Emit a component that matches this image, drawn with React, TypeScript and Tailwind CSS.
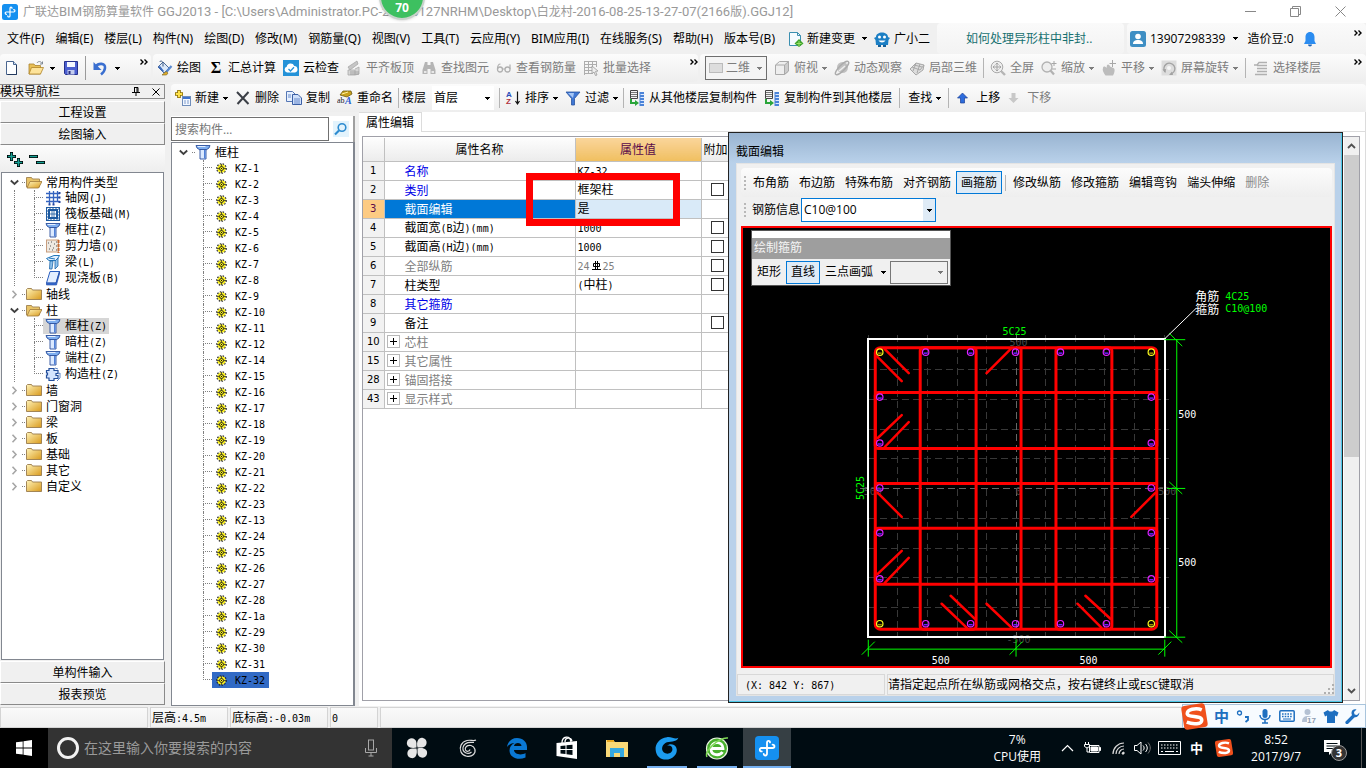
import type { ReactNode } from "react";

/* ---------- text helpers ---------- */

// Latin runs are set at half the width of a CJK glyph, like a bitmap Song face.
function Song({ children }: { children: string }) {
  return (
    <span className="font-['Noto_Sans_CJK_SC',sans-serif] text-[12px] whitespace-pre">
      {children.split(/([\x20-\x7e]+)/).map((part, i) =>
        i % 2 ? (
          <span key={i} className="font-['DejaVu_Sans_Mono',monospace] text-[10px]">
            {part}
          </span>
        ) : (
          part
        ),
      )}
    </span>
  );
}

function Caret({ className = "" }: { className?: string }) {
  return (
    <svg width="5" height="3" viewBox="0 0 5 3" className={`shrink-0 ${className}`} fill="currentColor" shapeRendering="crispEdges">
      <path d="M0 0h5v1H4v1H3v1H2V2H1V1H0z" />
    </svg>
  );
}

function More() {
  return (
    <svg width="8" height="6" viewBox="0 0 8 6" fill="none" stroke="#000" strokeWidth="1.4" className="shrink-0">
      <path d="M.5.5 3 3 .5 5.5M4.5.5 7 3 4.5 5.5" />
    </svg>
  );
}

function Sep({ className = "" }: { className?: string }) {
  return <span className={`h-5 w-px shrink-0 bg-[#b4b4b4] ${className}`} />;
}

/* ---------- icons ---------- */

function Icon({ children, size = 16, box = 16 }: { children: ReactNode; size?: number; box?: number }) {
  return (
    <svg width={size} height={size} viewBox={`0 0 ${box} ${box}`} fill="none" className="shrink-0">
      {children}
    </svg>
  );
}

const AppLogo = ({ size }: { size: number }) => (
  <Icon size={size}>
    <rect width="16" height="16" rx="2.5" fill="#1590f0" />
    <path
      d="M10 4.300C10 2.800 8 2.800 8 4.500V8H4.300C2.800 8 2.800 10.300 4.500 10.300M8 8h3.700c1.700 0 1.700-2.300 0-2.300M8 8v3.700c0 1.700-2.200 1.700-2.200.2"
      stroke="#fff"
      strokeWidth="1.200"
      strokeLinecap="round"
    />
  </Icon>
);

const NewFile = () => (
  <Icon>
    <path d="M2.500 1.500h7l3 3v10h-10z" fill="#fdfeff" stroke="#4a6690" />
    <path d="M9.500 1.500v3h3" fill="#c9dcf2" stroke="#4a6690" />
    <path d="M12.500 5v9.500h-9" stroke="#23395d" />
  </Icon>
);

const OpenFolder = () => (
  <Icon>
    <path d="M1 4h5l1 1.500h5.500V14H1z" fill="#e8bf55" stroke="#a98330" strokeWidth=".8" />
    <path d="M3.500 7.500H15.500L12.500 14H1z" fill="#fde39a" stroke="#b0852a" strokeWidth=".8" />
    <path d="M9 3c1-2 4-2 5 .5M14.500 1.500v2.500h-2.500" stroke="#7d8792" />
  </Icon>
);

const Save = () => (
  <Icon>
    <path d="M1.500 1.500h13v13h-12l-1-1z" fill="#4b5fd0" stroke="#26308c" />
    <path d="M4 2h8v5H4z" fill="#f5f8ff" />
    <path d="M4.500 10h7v4.500h-7z" fill="#c4cdee" />
    <path d="M5.500 11h2v3h-2z" fill="#2a2f80" />
  </Icon>
);

const Undo = () => (
  <Icon>
    <path d="M4 6.500C6 3 13.500 2.500 13 8c-.3 3-2 5-4 6.500" stroke="#3a6fd0" strokeWidth="2.600" />
    <path d="M1.500 2v8h8z" fill="#3a6fd0" />
  </Icon>
);

const Paint = () => (
  <Icon>
    <path d="M6 2l6 6-5 5-6-6z" fill="#dbe8f8" stroke="#4c6a99" />
    <path d="M2.500 2c1.500-2 3.500-.5 3.500 1.500v3" stroke="#38557f" />
    <path d="M1 7l5 5 1-1-4-5z" fill="#3c6cc0" />
    <path d="M14.500 6 8 13.500" stroke="#5a8ad0" strokeWidth="2.200" />
    <path d="M9 11.500l-4 3.500h4.500l1.500-2z" fill="#e0ad2c" stroke="#76611d" strokeWidth=".6" />
  </Icon>
);

const CloudCheck = () => (
  <Icon>
    <rect width="16" height="16" fill="#2492d8" />
    <path d="M4 12.500a3 3 0 0 1-.3-5.800A4 4 0 0 1 11.300 6a3.300 3.300 0 0 1 .7 6.500z" fill="#fff" />
    <path d="M5.500 9l2 2 3.500-3.800" stroke="#2492d8" strokeWidth="1.300" />
  </Icon>
);

const AlignSlab = () => (
  <Icon>
    <path d="M2 7l9-6 1 3-8 6z" fill="#c6c6c6" stroke="#a2a2a2" strokeWidth=".7" />
    <path d="M2 10h7v5H2zM9 9l4-2v7l-4 1" fill="#d6d6d6" stroke="#a8a8a8" strokeWidth=".8" />
    <path d="M4 12h9M4 14h9" stroke="#999" strokeWidth=".8" />
  </Icon>
);

const Binocular = () => (
  <Icon>
    <path d="M4 2h2.500v3h3V2H12l2.500 8v4h-5v-5h-3v5h-5v-4z" fill="#b5b5b5" />
    <path d="M3 11h2.500v2H3zM10.500 11H13v2h-2.500z" fill="#e8e8e8" />
  </Icon>
);

const Glasses = () => (
  <Icon>
    <circle cx="4" cy="9.500" r="2.500" stroke="#b0b0b0" strokeWidth="1.300" />
    <circle cx="11.500" cy="9.500" r="2.500" stroke="#b0b0b0" strokeWidth="1.300" />
    <path d="M6.500 9h2.500M1.500 9c0-3 1-5 3-5M14 9V4.500" stroke="#b0b0b0" strokeWidth="1.200" />
  </Icon>
);

const BatchSelect = () => (
  <Icon>
    <path d="M1.500 1.500h12M1.500 4.500h12M1.500 7.500h8M1.500 10.500h8M1.500 13.500h8M1.500 1v14M5.500 1v13M9.500 1v6M13.500 1v6" stroke="#adadad" />
    <path d="M9 6l6 5-2.500.4L14 15l-1.500.6L11 12l-2 1.700z" fill="#eee" stroke="#999" strokeWidth=".8" />
  </Icon>
);

const Cube = () => (
  <Icon>
    <path d="M1.500 5l4-3.500h9V11l-4 3.500h-9z" fill="#eee" stroke="#aaa" />
    <path d="M10.500 5l4-3.500V11l-4 3.500z" fill="#ccc" stroke="#aaa" />
    <path d="M1.500 5h9" stroke="#aaa" />
  </Icon>
);

const Orbit = () => (
  <Icon>
    <circle cx="8.500" cy="7.500" r="5.500" fill="#c0c0c0" />
    <ellipse cx="8" cy="8" rx="9" ry="2.800" transform="rotate(-45 8 8)" stroke="#ababab" strokeWidth="1.400" />
    <path d="M5 11l6-5" stroke="#eee" strokeWidth="1.500" />
  </Icon>
);

const Local3d = () => (
  <Icon>
    <path d="M1 9l6-6 8 2-1 5-7 5z" fill="#ddd" stroke="#a8a8a8" />
    <path d="M3 7l8 3 4-5M5 5l8 2M4 11l3-8M8 13l3-9" stroke="#a8a8a8" />
  </Icon>
);

const FullScreen = () => (
  <Icon>
    <circle cx="7" cy="7" r="5.800" fill="#eee" stroke="#aaa" />
    <path d="M7 3v8M3 7h8M5.500 4.500 7 3l1.500 1.500M5.500 9.500 7 11l1.500-1.500M4.500 5.500 3 7l1.500 1.500M9.500 5.500 11 7 9.500 8.500" stroke="#a4a4a4" />
    <path d="M11 11l4 4" stroke="#b5b5b5" strokeWidth="2.400" />
  </Icon>
);

const Zoom = () => (
  <Icon>
    <circle cx="6" cy="7" r="5" fill="#eee" stroke="#b2b2b2" strokeWidth="1.300" />
    <path d="M9.500 10.500 13 14.500" stroke="#b2b2b2" strokeWidth="2.200" />
    <path d="M13 1v5M10.500 3.500h5M11 9h4" stroke="#a6a6a6" />
  </Icon>
);

const Pan = () => (
  <Icon>
    <path d="M2 8c0-2 2.500-2 3.500 0L6 5c1-1.500 3 0 3 1.500L12.500 8c2 1 1 5-.5 7.500H4.500C2.500 13 1 10 2 8z" fill="#bcbcbc" />
    <path d="M11.500 0v7M8.500 3.500h6.500" stroke="#a8a8a8" />
  </Icon>
);

const Rotate = () => (
  <Icon>
    <rect x=".5" y=".5" width="15" height="15" fill="#ddd" />
    <path d="M4 12a5.500 5.500 0 1 1 7 1.500" stroke="#a2a2a2" strokeWidth="1.300" />
    <path d="M8 15l3-3.500 1 3.500zM1.500 9.500 5 9l-.5 4z" fill="#a2a2a2" />
    <circle cx="8" cy="8" r="2" fill="#f6f6f6" />
  </Icon>
);

const Floors = () => (
  <Icon>
    <path d="M1 5h3l2-2.500h8M4 5.500h10M4 8.500h10M4 11.500h10M2 14.500h12" stroke="#b0b0b0" strokeWidth="1.300" />
  </Icon>
);

const NewItem = () => (
  <Icon>
    <path d="M4 0v8M0 4h8" stroke="#8a6d00" strokeWidth="3.600" />
    <path d="M4 .8v6.400M.8 4h6.400" stroke="#ffe24a" strokeWidth="2" />
    <rect x="7.500" y="6.500" width="8" height="9" fill="#f2f7ff" stroke="#6f8dba" />
    <path d="M8 7h7v2H8z" fill="#3d72d0" />
    <path d="M9 11h2M12 11h2M9 13h2M12 13h2" stroke="#7f9ccc" />
  </Icon>
);

const Cross = () => (
  <Icon>
    <path d="M2 2l11.500 12M13.500 2 2.500 14" stroke="#3b3f46" strokeWidth="2" />
  </Icon>
);

const Copy = () => (
  <Icon>
    <path d="M.5 1.500h6l3 3v7h-9z" fill="#e6f0ff" stroke="#5577b5" />
    <path d="M6.500 4.500h5.500l3.500 3.500v6.500h-9z" fill="#cfe0fb" stroke="#3b5fa5" />
    <path d="M8 9h6M8 11h6M8 13h6M2 5h3M2 7h3" stroke="#5b80c4" strokeWidth=".9" />
  </Icon>
);

const Rename = () => (
  <Icon>
    <path d="M3 5l3-4h8l1 3-5 3z" fill="#c9a21c" stroke="#6c5a14" strokeWidth=".8" />
    <path d="M5 4l6-2" stroke="#fff1a0" />
    <text x="0" y="13" fontSize="8" fontFamily="Liberation Serif" fill="#222">ab</text>
    <text x="8" y="14" fontSize="10" fontWeight="bold" fontStyle="italic" fontFamily="Liberation Serif" fill="#2d5fd0">A</text>
  </Icon>
);

const SortAz = () => (
  <Icon>
    <text x="1" y="7" fontSize="8" fontWeight="bold" fontFamily="Liberation Sans" fill="#2a4db8">A</text>
    <text x="1" y="14" fontSize="8" fontWeight="bold" fontFamily="Liberation Sans" fill="#b03040">Z</text>
    <path d="M12.500 1.500v12M10.500 11l2 3 2-3" stroke="#111" strokeWidth="1.200" />
  </Icon>
);

const Funnel = () => (
  <Icon>
    <path d="M1 2h14L9.500 8.500V15h-3V8.500z" fill="#3f77d4" stroke="#2a549f" strokeWidth=".8" />
    <path d="M3 3h6L8 8z" fill="#a5c6f6" />
  </Icon>
);

const FloorCopy = () => (
  <Icon>
    <path d="M1.500.5h7v8h-7z" fill="#f4f4f4" stroke="#444" />
    <path d="M2 2.500h6M2 4.500h6M2 6.500h6" stroke="#777" />
    <path d="M3 9v3h3v-2l4 3-4 3v-2H1V9z" fill="#2aa53a" />
    <path d="M10.500 2h4.500v14h-4.500z" fill="#4a83d8" />
    <path d="M11.500 4.500h4M11.500 7.500h4M11.500 10.500h4M11.500 13.500h4" stroke="#dce9ff" />
  </Icon>
);

const ArrowBlock = ({ down = false }: { down?: boolean }) => (
  <Icon>
    {down ? (
      <path d="M4.500 3h4v5h3l-5 5-5-5h3z" fill="#c8c8c8" />
    ) : (
      <path d="M4.500 13h4V8h3l-5-5-5 5h3z" fill="#2d6cdc" stroke="#1b3f95" strokeWidth=".7" />
    )}
  </Icon>
);

const Folder = ({ open }: { open?: boolean }) => (
  <Icon>
    <defs>
      <linearGradient id="folder" x1="0" y1="0" x2="1" y2="1">
        <stop offset="0" stopColor="#fff3b8" />
        <stop offset="1" stopColor="#d99a1c" />
      </linearGradient>
    </defs>
    {open ? (
      <>
        <path d="M.5 3.500h5l1 1.500h7V13H.5z" fill="#e9c468" stroke="#a88b58" />
        <path d="M4 7.500H16L12.500 14H1z" fill="url(#folder)" stroke="#a0783a" strokeWidth=".8" />
      </>
    ) : (
      <path d="M.5 3.500l1-1h4l1 1.500h9v9.500H.5z" fill="url(#folder)" stroke="#9a7c4c" strokeWidth=".9" />
    )}
  </Icon>
);

const Pillar = () => (
  <Icon>
    <path d="M1 1.500h14l-1 2.500-3 2H5L2 4z" fill="#7eaef0" stroke="#2a4f9c" strokeWidth=".9" />
    <path d="M2.500 2.500h8" stroke="#e3efff" />
    <path d="M5 5.500h6V15H5z" fill="#dceaff" stroke="#2a4f9c" strokeWidth=".9" />
    <path d="M9 6h1.500v8.500H9z" fill="#4f80d8" />
  </Icon>
);

const Axis = () => (
  <Icon>
    <path d="M4.500 1v13M8.500 1v13M12.500 1v11M1 3.500h14M1 7.500h14M1 11.500h14" stroke="#3565c0" strokeWidth="1.300" />
    <path d="M13.500 2h2v2h-2zM13.500 6.500h2v2h-2zM13.500 11h2v2h-2zM3.500 13.500h2v2h-2zM7.500 13.500h2v2h-2z" fill="#2447a0" />
  </Icon>
);

const Raft = () => (
  <Icon>
    <rect x="1" y="1" width="14" height="14" fill="#1d5aa0" />
    <rect x="2.500" y="2.500" width="11" height="11" stroke="#fff" strokeDasharray="2 1" />
    <rect x="5" y="5" width="6" height="6" fill="#fff" />
    <path d="M7 5v6M9 5v6M5 8h6" stroke="#1d5aa0" strokeWidth=".8" />
  </Icon>
);

const ShearWall = () => (
  <Icon>
    <rect x="1.500" y="2" width="12" height="12" fill="#eee9e2" stroke="#c89d7d" />
    <path d="M3 5h1M6 4h1M9 6h1M5 8h1M8 10h1M4 11h1M11 8h1M11 12h1M7 12h1M11 4h1" stroke="#555" />
    <path d="M13.500 2v13" stroke="#c66a33" strokeWidth="2" strokeDasharray="3 1" />
  </Icon>
);

const Beam = () => (
  <Icon>
    <path d="M1.500 4.500 9 1.500h5.500l-3 5H4z" fill="#e2f0ff" stroke="#2277bb" />
    <path d="M5 7h3l-1 8H4.500zM10 7l3-3v8l-3 3z" fill="#8ec3ee" stroke="#1e66a8" strokeWidth=".8" />
    <path d="M4 4l6 1" stroke="#2277bb" />
  </Icon>
);

const Slab = () => (
  <Icon>
    <path d="M5 1.500h9.500L11 13H1.500z" fill="#e4efff" stroke="#2b5fc0" />
    <path d="M1.500 13H11l3.500-11.500V4L11.500 15H1.500z" fill="#3a6fd6" stroke="#2048a0" strokeWidth=".6" />
  </Icon>
);

const Tie = () => (
  <Icon>
    <path d="M4 2.500h5v2h4v3h-2v2h2v3H9v2H4v-2.500H1.500V9h1V7h-1V4.500H4z" fill="#d4e5ff" stroke="#234f9c" strokeWidth="1.200" />
    <path d="M10 2l3 1M13 8l2-1v5l-3 3" stroke="#5f86c9" />
  </Icon>
);

const Gear = () => (
  <svg width="11" height="11" viewBox="0 0 11 11" fill="none" className="shrink-0">
    <circle cx="5.500" cy="5.500" r="4.300" fill="#f4ea1c" />
    <circle cx="5.500" cy="5.500" r="4.800" stroke="#222" strokeWidth="1.100" strokeDasharray="1.500 1.400" />
    <path d="M5.500 1v9M1 5.500h9" stroke="#333" strokeWidth=".8" />
    <circle cx="5.500" cy="5.500" r="2" stroke="#222" fill="#f4ea1c" strokeWidth=".9" />
    <path d="M5 5h1v1H5z" fill="#111" />
  </svg>
);

const Chevron = ({ open }: { open?: boolean }) => (
  <svg width="9" height="9" viewBox="0 0 9 9" fill="none" className="shrink-0">
    {open ? (
      <path d="M.8 2.500 4.500 6l3.700-3.500" stroke="#404040" strokeWidth="1.800" />
    ) : (
      <path d="M2.500.8 6 4.500 2.500 8.200" stroke="#a6a6a6" strokeWidth="1.600" />
    )}
  </svg>
);

/* ---------- top bars ---------- */

function TitleBar() {
  return (
    <header className="relative flex h-[23px] shrink-0 items-center bg-white pl-[2px] text-[12px] text-[#999]">
      <AppLogo size={16} />
      <h1 className="ml-[5px] flex-1 font-['Roboto','Noto_Sans_CJK_SC',sans-serif] text-[13px] whitespace-nowrap">
        <span className="text-[12px]">广联达</span>BIM<span className="text-[12px]">钢筋算量软件</span> GGJ2013 -
        [C:\Users\Administrator.PC-20160127NRHM\Desktop\<span className="text-[12px]">白龙村</span>
        -2016-08-25-13-27-07(2166<span className="text-[12px]">版</span>).GGJ12]
      </h1>
      <div className="absolute -top-[26px] left-[379px] flex size-[46px] items-end justify-center rounded-full border-2 border-[#c8d2cb] bg-[#3dc060] pb-[2px] text-[12px] leading-4 font-bold text-white shadow">
        70
      </div>
      <div className="flex gap-[34px] pr-5">
        <button aria-label="最小化">
          <svg width="11" height="11" viewBox="0 0 11 11" stroke="#888"><path d="M0 5.500h11" /></svg>
        </button>
        <button aria-label="还原">
          <svg width="11" height="11" viewBox="0 0 11 11" fill="none" stroke="#888">
            <path d="M.5 2.500h8v8h-8zM2.500 2V.5h8v8H9" />
          </svg>
        </button>
        <button aria-label="关闭">
          <svg width="11" height="11" viewBox="0 0 11 11" stroke="#888"><path d="M.5.5l10 10M10.500.5l-10 10" /></svg>
        </button>
      </div>
    </header>
  );
}

const menus = [
  "文件(F)", "编辑(E)", "楼层(L)", "构件(N)", "绘图(D)", "修改(M)", "钢筋量(Q)", "视图(V)",
  "工具(T)", "云应用(Y)", "BIM应用(I)", "在线服务(S)", "帮助(H)", "版本号(B)",
];

function MenuBar() {
  return (
    <nav className="flex h-[31px] shrink-0 items-stretch bg-[#f0f0f0]">
      <div className="flex w-[937px] shrink-0 items-center pr-[7px] pl-[7px]">
        <div className="flex gap-[11px] font-['Noto_Sans','Noto_Sans_CJK_SC',sans-serif]">
          {menus.map((m) => (
            <button key={m} className="whitespace-nowrap">{m}</button>
          ))}
        </div>
        <button className="ml-auto flex items-center gap-[3px] whitespace-nowrap">
          <Icon>
            <path d="M1.500 1.500h8l3 3v10h-11z" fill="#f5fbff" stroke="#3b8fb0" />
            <path d="M9.500 1.500v3h3" stroke="#3b8fb0" />
            <path d="M11 8l4.500 4.500L11 16l-4.500-3.500z" fill="#3fa32b" />
            <path d="M11 10v5M8.500 12.500h5" stroke="#9be36b" />
          </Icon>
          新建变更
          <Caret className="ml-1" />
        </button>
        <button className="ml-[7px] flex items-center gap-1 whitespace-nowrap">
          <Icon>
            <path d="M2 6c0-6 12-6 12 0l2 1-1.500 2-.5 5H2L1.500 9 0 7z" fill="#1c7fc4" />
            <circle cx="5.500" cy="6" r="1.500" fill="#fff" />
            <circle cx="10.500" cy="6" r="1.500" fill="#fff" />
            <path d="M4.500 9.500c1.500 2.500 5.500 2.500 7 0z" fill="#fff" />
            <path d="M4 14v2h3v-2M9 14v2h3v-2" fill="#14609a" />
          </Icon>
          广小二
        </button>
      </div>
      <a href="#tip" className="flex w-[187px] shrink-0 items-center rounded bg-gradient-to-b from-[#fafafa] to-[#f3f3f3] pl-[29px] text-[#167070]">
        如何处理异形柱中非封..
      </a>
      <div className="ml-[3px] flex flex-1 items-center rounded bg-gradient-to-b from-[#fafafa] to-[#f3f3f3] pl-[3px] whitespace-nowrap">
        <Icon>
          <rect width="16" height="16" rx="2.500" fill="#3f8fc4" />
          <circle cx="8" cy="5.500" r="2.800" fill="#fff" />
          <path d="M3 13c0-3 2-4 5-4s5 1 5 4z" fill="#fff" />
        </Icon>
        <span className="ml-1">13907298339</span>
        <Caret className="ml-2" />
        <span className="ml-[9px]">造价豆:0</span>
        <span className="ml-2">
          <Icon>
            <path d="M8 1c3 0 4.500 2.500 4.500 5v4l1.500 3H2l1.500-3V6C3.500 3.500 5 1 8 1z" fill="#2b8cf0" />
            <path d="M6 13.500c0 2.500 4 2.500 4 0z" fill="#1c62b5" />
          </Icon>
        </span>
        <span className="mr-1 mb-3 ml-auto"><More /></span>
      </div>
    </nav>
  );
}

function Tool({ icon, label, caret, dim }: { icon?: ReactNode; label?: string; caret?: boolean; dim?: boolean }) {
  return (
    <button className={`flex shrink-0 items-center gap-1 whitespace-nowrap ${dim ? "text-[#7d7d7d]" : "text-black"}`} disabled={dim}>
      {icon}
      {label}
      {caret && <Caret />}
    </button>
  );
}

const strip = "flex items-center rounded bg-gradient-to-b from-[#fcfcfc] to-[#eee]";

function MainTools() {
  return (
    <div className="flex h-[30px] shrink-0 items-stretch gap-[2px] bg-[#f0f0f0] pb-[2px]">
      <div className={`${strip} w-[151px] shrink-0 pl-1`}>
        <NewFile />
        <span className="ml-2"><OpenFolder /></span>
        <Caret className="ml-[6px]" />
        <span className="ml-2"><Save /></span>
        <span className="mx-[6px] h-6 w-px bg-[#9a9a9a]" />
        <Undo />
        <Caret className="ml-[7px]" />
        <span className="mb-3 ml-auto pr-[3px]"><More /></span>
      </div>
      <div className={`${strip} w-[545px] shrink-0 gap-[7px] pl-1`}>
        <Tool icon={<Paint />} label="绘图" />
        <Tool icon={<span className="w-4 text-center font-['Liberation_Serif',serif] text-[16px] leading-4 font-bold">Σ</span>} label="汇总计算" />
        <Tool icon={<CloudCheck />} label="云检查" />
        <Tool icon={<AlignSlab />} label="平齐板顶" dim />
        <Tool icon={<Binocular />} label="查找图元" dim />
        <Tool icon={<Glasses />} label="查看钢筋量" dim />
        <Tool icon={<BatchSelect />} label="批量选择" dim />
        <span className="mb-3 ml-auto"><More /></span>
      </div>
      <div className={`${strip} min-w-0 flex-1 gap-[7px] pl-[5px]`}>
        <label className="relative flex h-6 w-[62px] shrink-0 items-center border border-[#6e6e6e] bg-[#f4f4f4] pl-[3px] text-[#7d7d7d]">
          <span className="h-[10px] w-[14px] border border-[#bbb] bg-[#ddd]" />
          <select aria-label="视图模式" className="absolute inset-0 appearance-none pl-[20px] leading-4">
            <option>二维</option>
          </select>
          <Caret className="pointer-events-none absolute right-1" />
        </label>
        <Tool icon={<Cube />} label="俯视" caret dim />
        <Tool icon={<Orbit />} label="动态观察" dim />
        <Tool icon={<Local3d />} label="局部三维" dim />
        <Sep className="-mx-px" />
        <Tool icon={<FullScreen />} label="全屏" dim />
        <Tool icon={<Zoom />} label="缩放" caret dim />
        <Tool icon={<Pan />} label="平移" caret dim />
        <Tool icon={<Rotate />} label="屏幕旋转" caret dim />
        <Sep />
        <Tool icon={<Floors />} label="选择楼层" dim />
        <span className="mb-3 ml-auto pr-1"><More /></span>
      </div>
    </div>
  );
}

function ComponentTools() {
  return (
    <div className={`${strip} h-7 shrink-0 gap-[7px] pl-1`}>
      <Tool icon={<NewItem />} label="新建" caret />
      <Tool icon={<Cross />} label="删除" />
      <Tool icon={<Copy />} label="复制" />
      <Tool icon={<Rename />} label="重命名" />
      <Sep className="-mx-[2px]" />
      <label className="-ml-[2px] flex shrink-0 items-center gap-[6px]">
        楼层
        <span className="relative flex h-6 w-[62px] items-center bg-white">
          <select aria-label="楼层" className="absolute inset-0 appearance-none pl-[2px] leading-4">
            <option>首层</option>
          </select>
          <Caret className="pointer-events-none absolute right-1" />
        </span>
      </label>
      <Sep className="-mx-[2px]" />
      <Tool icon={<SortAz />} label="排序" caret />
      <Tool icon={<Funnel />} label="过滤" caret />
      <Sep className="-mx-[2px]" />
      <Tool icon={<FloorCopy />} label="从其他楼层复制构件" />
      <Tool icon={<FloorCopy />} label="复制构件到其他楼层" />
      <Sep className="mr-px" />
      <Tool label="查找" caret />
      <Sep />
      <Tool icon={<ArrowBlock />} label="上移" />
      <Tool icon={<ArrowBlock down />} label="下移" dim />
    </div>
  );
}

/* ---------- module navigation ---------- */

type Leaf = { label: string; icon: ReactNode; active?: boolean };
type Branch = { label: string; items?: Leaf[] };

const modules: Branch[] = [
  {
    label: "常用构件类型",
    items: [
      { label: "轴网(J)", icon: <Axis /> },
      { label: "筏板基础(M)", icon: <Raft /> },
      { label: "框柱(Z)", icon: <Pillar /> },
      { label: "剪力墙(Q)", icon: <ShearWall /> },
      { label: "梁(L)", icon: <Beam /> },
      { label: "现浇板(B)", icon: <Slab /> },
    ],
  },
  { label: "轴线" },
  {
    label: "柱",
    items: [
      { label: "框柱(Z)", icon: <Pillar />, active: true },
      { label: "暗柱(Z)", icon: <Pillar /> },
      { label: "端柱(Z)", icon: <Pillar /> },
      { label: "构造柱(Z)", icon: <Tie /> },
    ],
  },
  { label: "墙" },
  { label: "门窗洞" },
  { label: "梁" },
  { label: "板" },
  { label: "基础" },
  { label: "其它" },
  { label: "自定义" },
];

function Elbow({ last, className }: { last: boolean; className: string }) {
  return (
    <span className={`flex h-4 shrink-0 flex-col ${className}`}>
      <span className="h-2 border-b border-l border-dotted border-[#808080]" />
      {!last && <span className="h-2 border-l border-dotted border-[#808080]" />}
    </span>
  );
}

function NavButton({ children }: { children: string }) {
  return (
    <button className="flex h-[22px] w-full shrink-0 items-center justify-center border border-[#fff] border-r-[#8a8a8a] border-b-[#8a8a8a] bg-[#f0f0f0]">
      <Song>{children}</Song>
    </button>
  );
}

function ModuleNav() {
  return (
    <aside className="flex w-[165px] shrink-0 flex-col pb-[1px]">
      <div className="flex h-[15px] shrink-0 items-center border border-l-0 border-[#8a8a8a] bg-[#f0f0f0] pr-1 leading-3">
        <h2 className="flex-1"><Song>模块导航栏</Song></h2>
        <button aria-label="固定" className="mr-3">
          <svg width="8" height="9" viewBox="0 0 8 9" fill="none" stroke="#000"><path d="M2 .5h4v5M2.500.5v5M5 .5v5M0 5.500h8M4 6v3" /></svg>
        </button>
        <button aria-label="关闭导航">
          <svg width="8" height="8" viewBox="0 0 8 8" stroke="#000"><path d="M.5.5l7 7M7.500.5l-7 7" /></svg>
        </button>
      </div>
      <div className="flex flex-col pt-[2px]">
        <NavButton>工程设置</NavButton>
        <NavButton>绘图输入</NavButton>
      </div>
      <div className="flex h-[27px] shrink-0 items-center gap-[6px] bg-gradient-to-b from-[#fcfcfc] to-[#eee] pt-[2px] pl-[7px]">
        <button aria-label="全部展开">
          <svg width="16" height="15" viewBox="0 0 16 15" fill="none">
            <path d="M4.500 0v9M0 4.500h9M11.500 6v9M7 10.500h9" stroke="#000" strokeWidth="3" />
            <path d="M4.500.8v7.400M.8 4.500h7.400M11.500 6.800v7.400M7.800 10.500h7.400" stroke="#16a094" strokeWidth="1.600" />
          </svg>
        </button>
        <button aria-label="全部折叠">
          <svg width="16" height="15" viewBox="0 0 16 15" fill="none">
            <path d="M0 4.500h9M7 10.500h9" stroke="#000" strokeWidth="3" />
            <path d="M.8 4.500h7.400M7.800 10.500h7.400" stroke="#16a094" strokeWidth="1.600" />
          </svg>
        </button>
      </div>
      <ul className="mx-[1px] min-h-0 flex-1 overflow-hidden border border-[#828790] bg-white pt-[1px]">
        {modules.map((b) => (
          <li key={b.label}>
            <div className="flex h-4 items-center pl-[8px]">
              <Chevron open={!!b.items} />
              <span className="mr-[1px] ml-[3px] w-[3px] border-b border-dotted border-[#808080]" />
              <Folder open={!!b.items} />
              <span className="ml-1 leading-4"><Song>{b.label}</Song></span>
            </div>
            {b.items && (
              <ul>
                {b.items.map((it, i) => (
                  <li key={it.label} className="flex h-4 items-center pl-[12px]">
                    <span className="h-4 w-5 shrink-0 border-l border-dotted border-[#808080]" />
                    <Elbow last={i === b.items!.length - 1} className="w-[9px]" />
                    <span className={`flex h-4 items-center gap-1 px-[2px] leading-4 ${it.active ? "bg-[#d6d6d6]" : ""}`}>
                      {it.icon}
                      <Song>{it.label}</Song>
                    </span>
                  </li>
                ))}
              </ul>
            )}
          </li>
        ))}
      </ul>
      <div className="flex flex-col pt-[1px]">
        <NavButton>单构件输入</NavButton>
        <NavButton>报表预览</NavButton>
      </div>
    </aside>
  );
}

/* ---------- component list ---------- */

const columns = [
  "1", "2", "3", "4", "5", "6", "7", "8", "9", "10", "11", "12", "14", "15", "16", "17", "18", "19",
  "20", "21", "22", "23", "13", "24", "25", "26", "27", "28", "1a", "29", "30", "31", "32",
].map((n) => `KZ-${n}`);

function ComponentList() {
  return (
    <section className="flex w-[184px] shrink-0 flex-col">
      <div className="mt-1 flex h-[26px] shrink-0 items-center border-r-2 border-[#a0a0a0] bg-white">
        <input
          aria-label="搜索构件"
          placeholder="搜索构件…"
          className="h-6 w-[158px] border border-[#707070] bg-white px-[3px] text-[12px] placeholder:text-[#777]"
        />
        <button aria-label="搜索" className="ml-[4px]">
          <Icon>
            <rect width="16" height="16" fill="#e3f3fc" />
            <circle cx="9" cy="6.500" r="3.800" stroke="#2d8bd0" strokeWidth="1.600" />
            <path d="M6 9.500 2 13.500" stroke="#2d8bd0" strokeWidth="2.200" />
          </Icon>
        </button>
      </div>
      <ul className="min-h-0 flex-1 overflow-hidden border border-r-2 border-[#828790] bg-white pt-[1px]">
        <li className="flex h-4 items-center pl-[7px]">
          <Chevron open />
          <span className="ml-[4px] w-[3px] border-b border-dotted border-[#808080]" />
          <Pillar />
          <span className="ml-1 leading-4"><Song>框柱</Song></span>
        </li>
        {columns.map((name, i) => {
          const active = name === "KZ-32";
          return (
            <li key={name} className="flex h-4 items-center pl-[31px]">
              <Elbow last={i === columns.length - 1} className="w-[9px]" />
              <span className={`flex h-4 items-center gap-2 px-1 leading-4 ${active ? "bg-[#316ac5]" : ""}`}>
                <Gear />
                <Song>{name}</Song>
              </span>
            </li>
          );
        })}
      </ul>
    </section>
  );
}

/* ---------- property table ---------- */

type Prop = { no: number; name: string; value?: ReactNode; tone?: "blue" | "gray"; check?: boolean; group?: boolean };

const props: Prop[] = [
  { no: 1, name: "名称", value: <Song>KZ-32</Song>, tone: "blue" },
  { no: 2, name: "类别", value: <Song>框架柱</Song>, tone: "blue", check: true },
  { no: 3, name: "截面编辑", value: <Song>是</Song> },
  { no: 4, name: "截面宽(B边)(mm)", value: <Song>1000</Song>, check: true },
  { no: 5, name: "截面高(H边)(mm)", value: <Song>1000</Song>, check: true },
  {
    no: 6,
    name: "全部纵筋",
    tone: "gray",
    check: true,
    value: (
      <span className="flex items-center text-[#808080]">
        <Song>24</Song>
        <svg width="9" height="9" viewBox="0 0 9 9" fill="none" stroke="#000" className="mx-[2px]" aria-label="三级钢">
          <path d="M3.500 0v8M5.500 0v8M1.500 2.500h6v3h-6zM0 8.500h9" />
        </svg>
        <Song>25</Song>
      </span>
    ),
  },
  { no: 7, name: "柱类型", value: <Song>(中柱)</Song>, check: true },
  { no: 8, name: "其它箍筋", tone: "blue" },
  { no: 9, name: "备注", check: true },
  { no: 10, name: "芯柱", tone: "gray", group: true },
  { no: 15, name: "其它属性", tone: "gray", group: true },
  { no: 28, name: "锚固搭接", tone: "gray", group: true },
  { no: 43, name: "显示样式", tone: "gray", group: true },
];

const cell = "border-r border-b border-[#c0c0c0] p-0";

function PropertyTable() {
  return (
    <table className="w-[370px] table-fixed border-collapse leading-4">
      <colgroup>
        <col className="w-[21px]" />
        <col className="w-[191px]" />
        <col className="w-[126px]" />
        <col className="w-[32px]" />
      </colgroup>
      <thead>
        <tr className="h-[23px] bg-gradient-to-b from-[#fdfdfd] to-[#ececec]">
          <th className={cell} aria-label="序号" />
          <th className={`${cell} font-normal`}><Song>属性名称</Song></th>
          <th className={`${cell} bg-gradient-to-b from-[#fad59a] to-[#f0bf5f] font-normal text-[#5a0a4a]`}><Song>属性值</Song></th>
          <th className={`${cell} pl-[2px] text-left font-normal`}><Song>附加</Song></th>
        </tr>
      </thead>
      <tbody>
        {props.map((p) => {
          const active = p.no === 3;
          const tone = p.tone === "blue" ? "text-[#0000e8]" : p.tone === "gray" ? "text-[#808080]" : "text-black";
          return (
            <tr key={p.no} className="h-[19px]">
              <th className={`${cell} text-center font-['DejaVu_Sans',sans-serif] text-[10px] font-normal ${active ? "bg-[#fdcb83] text-[#5a0a4a]" : "bg-[#f2f2f2]"}`}>
                {p.no}
              </th>
              <td className={`${cell} ${active ? "bg-[#0078d7] text-white" : tone}`}>
                <div className="flex h-[18px] items-center">
                  <span className="flex w-5 shrink-0 justify-start pl-[2px]">
                    {p.group && (
                      <button aria-label={`展开${p.name}`} className="flex size-[13px] items-center justify-center border border-[#b8b8b8] bg-white">
                        <svg width="7" height="7" viewBox="0 0 7 7" stroke="#000"><path d="M3.500 0v7M0 3.500h7" /></svg>
                      </button>
                    )}
                  </span>
                  <Song>{p.name}</Song>
                </div>
              </td>
              <td className={`${cell} pl-[2px] ${active ? "bg-[#d9eaf8]" : ""}`}>{p.value}</td>
              <td className={cell}>
                {p.check && (
                  <input
                    type="checkbox"
                    aria-label={`附加 ${p.name}`}
                    className="mx-auto block size-[13px] appearance-none border border-[#333] bg-white"
                  />
                )}
              </td>
            </tr>
          );
        })}
      </tbody>
    </table>
  );
}

/* ---------- section drawing ---------- */

const gridX = [18, 47, 77, 107, 136, 196, 226, 255, 285, 315];
const gridY = [49, 79, 109, 138, 198, 228, 257, 287];
const barX = [30, 76, 121, 166, 211, 257, 302];
const barY = [77, 123, 168, 213, 259];

const bars = [
  ...barX.flatMap((x, i) => [32, 304].map((y) => ({ x, y, corner: i === 0 || i === barX.length - 1 }))),
  ...barY.flatMap((y) => [30, 302].map((x) => ({ x, y, corner: false }))),
];

const hooks =
  "M35 29 59 53M27 36 52 61M137 53 162 28M28 118 52 95M35 127 59 102M28 173 52 197M282 197 306 173" +
  "M28 254 52 231M35 263 59 238M92 284 117 308M101 276 125 299M137 284 162 308M228 284 252 308M236 276 261 299";

function SectionDrawing() {
  return (
    <svg
      viewBox="0 0 588 438"
      className="block h-full w-full"
      fontFamily="DejaVu Sans Mono, monospace"
      fontSize="10"
      role="img"
      aria-label="柱截面配筋"
    >
      <g transform="translate(107 92)" fill="none">
        <g stroke="#383838" strokeDasharray="7 4" shapeRendering="crispEdges">
          {gridX.map((x) => <path key={x} d={`M${x}.5 15V317`} />)}
          {gridY.map((y) => <path key={y} d={`M19 ${y}.5H320`} />)}
          <path d="M166.500 15V317M10 168.500H325" stroke="#666" />
        </g>
        <g fill="#484848">
          <text x="169" y="26" textAnchor="middle">500</text>
          <text x="169" y="323" textAnchor="middle">-500</text>
          <text x="169" y="175" textAnchor="middle">0</text>
          <text x="8" y="175">-500</text>
          <text x="309" y="175">500</text>
        </g>
        <rect x="18" y="19" width="298" height="298" stroke="#fff" strokeWidth="2" shapeRendering="crispEdges" />
        <g stroke="#f00" strokeWidth="3">
          <rect x="25.500" y="27.500" width="282" height="282" rx="5" />
          <rect x="70.500" y="27.500" width="56" height="282" rx="3" />
          <rect x="206.500" y="27.500" width="56" height="282" rx="3" />
          <path d="M171.500 28V309M26 163.500H307" />
          <rect x="25.500" y="72.500" width="282" height="56" rx="3" />
          <rect x="25.500" y="208.500" width="282" height="56" rx="3" />
          <path d={hooks} strokeWidth="2.500" strokeLinecap="round" />
        </g>
        {bars.map((b) => (
          <g key={`${b.x}-${b.y}`}>
            <circle cx={b.x} cy={b.y} r="3.200" stroke={b.corner ? "#ffff20" : "#e020ff"} strokeWidth="1.200" />
            <path d={`M${b.x - 2} ${b.y + 1}h4`} stroke={b.corner ? "#a08c00" : "#6a20ff"} strokeWidth="1.500" />
          </g>
        ))}
        <g stroke="#00ff00">
          <path d="M18 329.500H315M18.500 320V337M166.500 320V337M315.500 320V337M12 335 25 322M160 335 173 322M309 335 322 322" />
          <path d="M327.500 19V317M315 19.500H336M318 168.500H336M315 317.500H336M320 13 333 26M320 162 333 174M320 311 333 323" />
        </g>
        <path d="M315 19 347-12" stroke="#fff" />
        <g fill="#00ff00">
          <text x="165" y="15" textAnchor="middle">5C25</text>
          <text x="0" y="0" textAnchor="middle" transform="translate(14 168) rotate(-90)">5C25</text>
          <text x="376" y="-20">4C25</text>
          <text x="376" y="-8">C10@100</text>
        </g>
        <g fill="#fff">
          <text x="91" y="344" textAnchor="middle">500</text>
          <text x="239" y="344" textAnchor="middle">500</text>
          <text x="338" y="98" textAnchor="middle">500</text>
          <text x="338" y="246" textAnchor="middle">500</text>
          <g fontSize="12" fontFamily="Noto Sans CJK SC, sans-serif">
            <text x="346" y="-19">角筋</text>
            <text x="346" y="-6">箍筋</text>
          </g>
        </g>
      </g>
    </svg>
  );
}

function Grip() {
  return <span className="h-[14px] w-0 shrink-0 border-l-2 border-dotted border-[#b8b8b8]" />;
}

const pressed = "border border-[#0078d7] bg-[#dfebf6]";

function SectionDialog() {
  return (
    <div
      role="dialog"
      aria-label="截面编辑"
      className="absolute top-5 right-[22px] bottom-[3px] left-[369px] flex flex-col border border-[#222] bg-[#b9d1ea] px-[7px] pb-[6px] shadow-[inset_-1px_-1px_0_#4cc8e8]"
    >
      <div className="-ml-[7px] -mr-[6px] flex h-[30px] shrink-0 items-center bg-gradient-to-b from-[#99b4d1] to-[#b9d1ea] pt-[7px] pl-[7px]">
        截面编辑
      </div>
      <div className="flex min-h-0 flex-1 flex-col border border-[#e4e4e4] bg-[#f0f0f0]">
        <div className="mt-[4px] mr-[2px] ml-[4px] flex min-h-0 flex-1 flex-col bg-[#f0f0f0]">
          <div className={`${strip} h-[29px] shrink-0 gap-[10px] pl-[3px] whitespace-nowrap`}>
            <Grip />
            <button className="-ml-[3px]">布角筋</button>
            <button>布边筋</button>
            <button>特殊布筋</button>
            <button>对齐钢筋</button>
            <button className={`-ml-[5px] h-[23px] px-1 ${pressed}`}>画箍筋</button>
            <span className="-mx-[7px] h-4 w-px bg-[#b4b4b4]" />
            <button className="ml-[4px]">修改纵筋</button>
            <button>修改箍筋</button>
            <button>编辑弯钩</button>
            <button>端头伸缩</button>
            <button disabled className="text-[#8a8a8a]">删除</button>
          </div>
          <div className="flex h-[29px] shrink-0 items-center pb-[3px] pl-[3px]">
            <Grip />
            <label htmlFor="rebar" className="ml-[6px]">钢筋信息</label>
            <span className="relative ml-[1px] flex h-6 w-[135px] items-center border border-[#0078d7] bg-white">
              <select id="rebar" className="absolute inset-0 appearance-none pl-[2px] leading-4">
                <option>C10@100</option>
              </select>
              <span className="pointer-events-none absolute top-0 right-0 flex h-full w-3 items-center justify-center bg-[#dfebf6]">
                <Caret />
              </span>
            </span>
          </div>
          <div className="relative min-h-0 flex-1 border-2 border-[#f00] bg-black">
            <SectionDrawing />
            <div className="absolute top-[2px] left-2 w-[200px] border border-[#555] bg-[#f0f0f0]">
              <div className="h-[7px] bg-white" />
              <div className="h-[21px] bg-[#9e9e9e] pl-[2px] leading-5 text-[#f4f4f4]">绘制箍筋</div>
              <div className="flex h-[26px] items-center whitespace-nowrap">
                <button className="ml-[5px]">矩形</button>
                <button className={`ml-[5px] h-[23px] px-1 ${pressed}`}>直线</button>
                <button className="ml-[5px] flex items-center">三点画弧<Caret className="ml-2" /></button>
                <span className="relative ml-[4px] flex h-[23px] w-[58px] items-center border border-[#777]">
                  <select aria-label="弧类型" className="absolute inset-0 appearance-none"><option> </option></select>
                  <Caret className="pointer-events-none absolute right-1 text-[#777]" />
                </span>
              </div>
            </div>
          </div>
        </div>
        <div className="mt-[6px] flex h-[21px] shrink-0 gap-[2px]">
          <div className="flex w-[148px] items-center border border-[#d8d8d8] pl-[7px]"><Song>(X: 842 Y: 867)</Song></div>
          <div className="flex flex-1 items-center border border-[#d8d8d8]"><Song>请指定起点所在纵筋或网格交点，按右键终止或ESC键取消</Song></div>
        </div>
      </div>
      <svg width="10" height="10" viewBox="0 0 10 10" fill="#b0b0b0" className="absolute right-2 bottom-2">
        <path d="M8 0h2v2H8zM4 4h2v2H4zM8 4h2v2H8zM0 8h2v2H0zM4 8h2v2H4zM8 8h2v2H8z" />
      </svg>
    </div>
  );
}

function PropertyPanel() {
  return (
    <section className="relative ml-1 flex min-w-0 flex-1 flex-col border-r border-[#dcdcdc] bg-white">
      <div className="flex h-5 shrink-0">
        <button className="h-5 w-[63px] border-t border-r border-[#dcdcdc] text-center leading-[18px]"><Song>属性编辑</Song></button>
        <span className="flex-1 border-b border-[#dcdcdc]" />
      </div>
      <div className="mt-1 mr-[5px] mb-[5px] ml-[3px] flex min-h-0 flex-1 border border-[#a0a0a8]">
        <div className="min-w-0 flex-1 overflow-hidden pt-[1px]">
          <PropertyTable />
        </div>
        <div className="flex w-[15px] shrink-0 flex-col items-center bg-[#f0f0f0]">
          <span className="flex h-[18px] items-center">
            <svg width="9" height="6" viewBox="0 0 9 6" fill="none" stroke="#505050" strokeWidth="1.800"><path d="M1 5l3.500-3.500L8 5" /></svg>
          </span>
          <span className="h-[302px] w-full bg-[#cdcdcd]" />
          <span className="mt-auto flex h-[18px] items-center">
            <svg width="9" height="6" viewBox="0 0 9 6" fill="none" stroke="#505050" strokeWidth="1.800"><path d="M1 1l3.500 3.500L8 1" /></svg>
          </span>
        </div>
      </div>
      <div className="pointer-events-none absolute top-[61px] left-[167px] h-[53px] w-[154px] border-7 border-[#f00]" />
      <SectionDialog />
    </section>
  );
}

/* ---------- bottom bars ---------- */

function StatusBar() {
  const box = "flex shrink-0 items-center border border-[#d4d4d4] bg-gradient-to-b from-[#fafafa] to-[#f0f0f0] pl-[1px]";
  return (
    <footer className="relative flex h-[22px] shrink-0 gap-[2px] bg-[#f0f0f0] pt-[1px]">
      <div className={`${box} w-[148px]`} />
      <div className={`${box} w-[78px]`}><Song>层高:4.5m</Song></div>
      <div className={`${box} w-[98px]`}><Song>底标高:-0.03m</Song></div>
      <div className={`${box} w-[48px]`}><Song>0</Song></div>
      <div className="flex-1 border border-[#d4d4d4] bg-gradient-to-b from-[#fafafa] to-[#f0f0f0]" />
      <div className="absolute -top-[2px] right-0 flex h-6 items-center gap-[6px] border border-[#a8c4dc] bg-[#f7fbff] pr-1 pl-[31px] text-[#1e6fc0]">
        <span className="absolute -top-[3px] -left-[3px]"><Sogou size={29} /></span>
        <span className="text-[15px] leading-4 font-bold">中</span>
        <Icon>
          <circle cx="4.500" cy="5" r="2" stroke="currentColor" strokeWidth="1.300" />
          <path d="M10 9h3v3l-2.500 2" stroke="currentColor" strokeWidth="1.800" />
        </Icon>
        <Icon>
          <rect x="5.500" y="1" width="5" height="9" rx="2.500" fill="currentColor" />
          <path d="M3 7c0 6 10 6 10 0M8 12v3M5 15h6" stroke="currentColor" strokeWidth="1.500" />
        </Icon>
        <Icon>
          <rect x=".8" y="2.800" width="14.400" height="10.400" rx="1" stroke="currentColor" strokeWidth="1.500" />
          <path d="M3 6h10M3 8.500h10" stroke="currentColor" strokeWidth="1.300" strokeDasharray="1.600 1.100" />
          <path d="M4 11h8" stroke="currentColor" />
        </Icon>
        <Icon>
          <circle cx="6.500" cy="4" r="3" fill="#b4c1d3" />
          <path d="M1 14c0-5 3-6 6-6s4 1 4 2v4z" fill="#b4c1d3" />
          <rect x="6" y="9" width="10" height="7" fill="#f7fbff" />
          <text x="6" y="15" fontSize="8" fontWeight="bold" fontFamily="Liberation Sans" fill="#8d9bb0">17</text>
        </Icon>
        <Icon>
          <path d="M5 2c1 2 5 2 6 0l4.500 2.500-1.500 4-2-1V15H4V7.500l-2 1-1.500-4z" fill="currentColor" />
        </Icon>
        <Icon>
          <path d="M2 14.500 8.500 8" stroke="currentColor" strokeWidth="3.200" strokeLinecap="round" />
          <path d="M14.500 4.500 12 7 9.500 6.500 9 4l2.500-2.500C8 0 5.500 3.500 7 7s7 3 7.500-2.500z" fill="currentColor" />
        </Icon>
      </div>
    </footer>
  );
}

const Sogou = ({ size }: { size: number }) => (
  <Icon size={size} box={28}>
    <rect x="2.500" y="2.500" width="23" height="23" rx="3" transform="rotate(-9 14 14)" fill="#f0501c" />
    <path d="M21 7.500C15 5 7 7.500 7 11c0 4.500 14 1.500 14 6.500 0 4-8 4.500-14.500 2" stroke="#fff" strokeWidth="3.400" />
  </Icon>
);

const apps: { name: string; state?: "open" | "active"; icon: ReactNode }[] = [
  {
    name: "风扇",
    icon: (
      <Icon size={24} box={24}>
        <path d="M11.500 11.500C5 13 1 10 2 6c1-5 9-5 9.500 1zM12.500 11.500C11 5 14 1 18 2c5 1 5 9-1 9.500zM12.500 12.500C19 11 23 14 22 18c-1 5-9 5-9.500-1zM11.500 12.500C13 19 10 23 6 22c-5-1-5-9 1-9.500z" fill="#e6e6e6" />
      </Icon>
    ),
  },
  {
    name: "旋风",
    icon: (
      <Icon size={24} box={24}>
        <path d="M21 4c-3 1.500-5-.5-9 .5-6 1.500-8 7-6 11.500s9 6 12.500 2.500c3-3 1.500-8-2.500-9-4-.8-6.500 2-5.500 4.500 1 2 4 1.500 4.500-.5M19 6.500C15 6 9 6 8 11.500c-.8 5 5 7.500 8.500 4.500" stroke="#ddd" strokeWidth="1.200" />
      </Icon>
    ),
  },
  {
    name: "Edge",
    icon: (
      <Icon size={24} box={24}>
        <path d="M2 11C3 5 7 2 12 2c6 0 10 4 10 9v3H9c0 4 7 6 11.500 3v4.500C13 25 4.500 21.500 4.500 14.500 4.500 11 6.500 8.500 9.500 7 6.500 7 3.500 9 2 11zm7-1h7.500C16.500 6 9.500 6 9 10z" fill="#0a78d4" />
      </Icon>
    ),
  },
  {
    name: "应用商店",
    icon: (
      <Icon size={24} box={24}>
        <path d="M1.500 7 22 5v18L1.500 20z" fill="#fff" />
        <path d="M7 7c0-7 8-8 9-1M10 6c0-5 6-5 7-1" stroke="#fff" strokeWidth="1.300" />
        <path d="M5.500 10l5-.5V13h-5zM11.500 9.300l6-.6V13h-6zM5.500 14h5v4l-5-.6zM11.500 14h6v5l-6-.8z" fill="#000c12" />
      </Icon>
    ),
  },
  {
    name: "资源管理器",
    icon: (
      <Icon size={24} box={24}>
        <path d="M1 4h7l2 2h13v15H1z" fill="#f9d978" />
        <path d="M2 4h7v2H2z" fill="#e9a820" />
        <path d="M5 12h14v9h-4v-4H9v4H5z" fill="#35a8e0" />
      </Icon>
    ),
  },
  {
    name: "游戏中心",
    state: "open",
    icon: (
      <Icon size={26} box={24}>
        <path d="M22.500 2.500c-3 2-6-1-10.500-.5C5 3 1 8 1.500 13.500 2 20 7 23.500 13 22.500s9.500-7 7.500-11c-1.500-3.500-6.500-4-8.500-1.500 3-.8 5 .5 5 3.200 0 3-3.500 5-6.500 3.700-4-1.800-4-7 0-9.500C14 5 20.500 7.500 22.500 2.500z" fill="#1c9cf0" />
      </Icon>
    ),
  },
  {
    name: "浏览器",
    state: "open",
    icon: (
      <Icon size={24} box={24}>
        <circle cx="12" cy="12.500" r="10.500" fill="#49b02e" stroke="#eaf6e2" strokeWidth="1.200" />
        <path d="M6 12.500h12c0-8-12-8-12 .5 0 7 9 7 11.500 3" stroke="#fff" strokeWidth="2.800" />
        <path d="M2 21C-1 15 14 1 23 2" stroke="#7ed957" strokeWidth="1.500" />
      </Icon>
    ),
  },
  { name: "广联达BIM钢筋算量软件", state: "active", icon: <AppLogo size={24} /> },
];

function Taskbar() {
  return (
    <div className="flex h-10 shrink-0 items-stretch bg-[#000c12] text-white">
      <button aria-label="开始" className="flex w-12 items-center justify-center bg-black">
        <Icon>
          <path d="M0 2.300 6.700 1.400v6.200H0zM7.500 1.200 16 0v7.600H7.500zM0 8.400h6.700v6.200L0 13.700zM7.500 8.400H16V16l-8.500-1.200z" fill="#fff" />
        </Icon>
      </button>
      <label className="flex w-[344px] items-center bg-[#333] pl-[9px]">
        <span className="size-[22px] shrink-0 rounded-full border-[3px] border-[#f2f2f2]" />
        <input aria-label="搜索" placeholder="在这里输入你要搜索的内容" className="ml-[5px] min-w-0 flex-1 text-[14px] placeholder:text-[#9a9a9a]" />
        <svg width="12" height="18" viewBox="0 0 12 18" fill="none" stroke="#a8a8a8" className="mr-[15px]">
          <rect x="3.500" y="1" width="5" height="10" />
          <path d="M.5 9v4.500h11V9M6 13.500V17M3.500 17h5" />
        </svg>
      </label>
      <div className="flex items-stretch gap-[2px] pl-[1px]">
        {apps.map((a) => (
          <button
            key={a.name}
            aria-label={a.name}
            className={`relative flex w-12 items-center justify-center ${a.state === "active" ? "bg-[#363f44]" : ""}`}
          >
            {a.icon}
            {a.state && (
              <span className={`absolute bottom-0 h-[2px] bg-[#76b0f0] ${a.state === "active" ? "inset-x-0" : "inset-x-1"}`} />
            )}
          </button>
        ))}
      </div>
      <div className="ml-auto flex items-center text-[12px] leading-[17px]">
        <div className="text-center">7%<br />CPU使用</div>
        <div className="ml-[20px] flex items-center gap-[7px]">
          <svg width="13" height="8" viewBox="0 0 13 8" fill="none" stroke="#fff" strokeWidth="1.200"><path d="M1 7l5.500-5.500L12 7" /></svg>
          <svg width="18" height="14" viewBox="0 0 18 14" fill="none" stroke="#fff" className="ml-[3px]">
            <path d="M5.500 4.500H15v7H5.500z" />
            <path d="M7 6h6.500v4H7zM15.500 6.500h1v3h-1z" fill="#fff" />
            <path d="M1.500 1v2M4.500 1v2M.5 3.500h5v2L3 7 .5 5.500zM3 7v4h2" />
          </svg>
          <svg width="16" height="16" viewBox="0 0 16 16" fill="none" stroke="#d8d8d8" className="ml-[2px]">
            <path d="M2 14A11 11 0 0 1 13 3M5 14a8 8 0 0 1 8-8M8 14a5 5 0 0 1 5-5" strokeWidth="1.200" />
            <path d="M11 14a2 2 0 0 1 2-2v2z" fill="#fff" />
          </svg>
          <svg width="17" height="14" viewBox="0 0 17 14" fill="none" stroke="#fff">
            <path d="M.5 4.500H3l4-3.500v12L3 9.500H.5zM9 4.500c1.500 1.500 1.500 3.500 0 5M11.500 3c2.300 2.500 2.300 5.500 0 8" />
            <path d="M14 1.500c3 3.500 3 7.500 0 11" stroke="#777" />
          </svg>
          <svg width="23" height="14" viewBox="0 0 23 14" fill="none" stroke="#fff">
            <path d="M.5.5h22v13H.5z" />
            <path d="M3 4h17M3 7h17" strokeDasharray="1.500 1.500" />
            <path d="M3 10.500h2M7 10.500h9M18 10.500h2" />
          </svg>
          <span className="ml-[2px] text-[13px] font-bold">中</span>
          <span className="ml-1"><Sogou size={20} /></span>
        </div>
        <div className="ml-[17px] text-center">8:52<br />2017/9/7</div>
        <button aria-label="通知" className="relative ml-[22px] mb-[2px]">
          <svg width="18" height="17" viewBox="0 0 18 17" fill="none">
            <path d="M1 1h16v12H9l-3 3v-3H1z" fill="#fff" />
            <path d="M3.500 4.500h11M3.500 7h11M3.500 9.500h7" stroke="#000c12" />
          </svg>
          <span className="absolute top-[6px] left-2 flex size-4 items-center justify-center rounded-full border border-[#999] bg-[#333] text-[11px] font-bold">3</span>
        </button>
        <span className="ml-5 h-10 w-[5px] border-l border-[#555]" />
      </div>
    </div>
  );
}

export default function App() {
  return (
    <div className="flex h-screen flex-col overflow-hidden bg-[#f0f0f0] font-['Open_Sans','Noto_Sans_CJK_SC',sans-serif] text-[12px] leading-4 text-black">
      <TitleBar />
      <MenuBar />
      <MainTools />
      <main className="flex min-h-0 flex-1">
        <ModuleNav />
        <div className="ml-[6px] flex min-w-0 flex-1 flex-col">
          <ComponentTools />
          <div className="flex min-h-0 flex-1">
            <ComponentList />
            <PropertyPanel />
          </div>
        </div>
      </main>
      <StatusBar />
      <Taskbar />
    </div>
  );
}
